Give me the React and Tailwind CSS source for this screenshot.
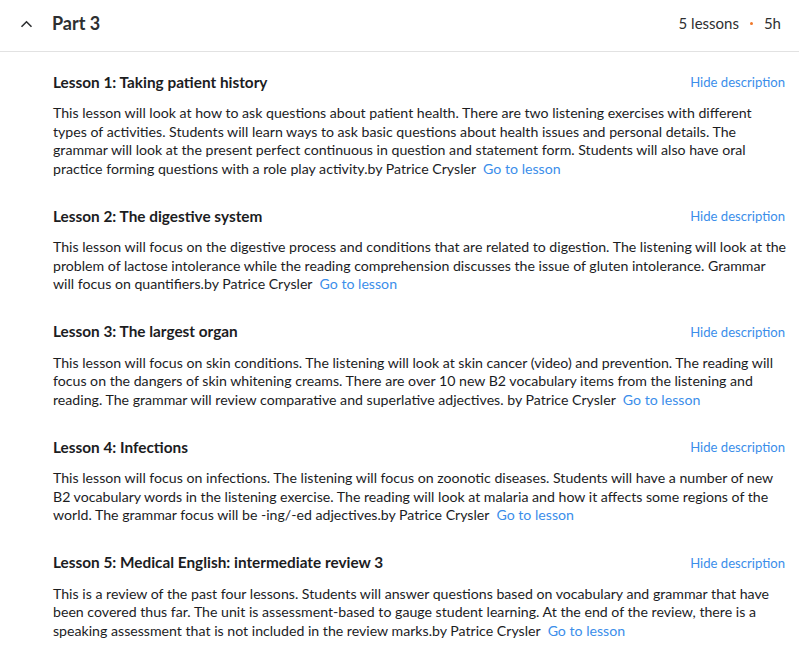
import React from "react";

const lessons = [
  {
    title: "Lesson 1: Taking patient history",
    desc: "This lesson will look at how to ask questions about patient health. There are two listening exercises with different types of activities. Students will learn ways to ask basic questions about health issues and personal details. The grammar will look at the present perfect continuous in question and statement form. Students will also have oral practice forming questions with a role play activity.by Patrice Crysler",
  },
  {
    title: "Lesson 2: The digestive system",
    desc: "This lesson will focus on the digestive process and conditions that are related to digestion. The listening will look at the problem of lactose intolerance while the reading comprehension discusses the issue of gluten intolerance. Grammar will focus on quantifiers.by Patrice Crysler",
  },
  {
    title: "Lesson 3: The largest organ",
    desc: "This lesson will focus on skin conditions. The listening will look at skin cancer (video) and prevention. The reading will focus on the dangers of skin whitening creams. There are over 10 new B2 vocabulary items from the listening and reading. The grammar will review comparative and superlative adjectives. by Patrice Crysler",
  },
  {
    title: "Lesson 4: Infections",
    desc: "This lesson will focus on infections. The listening will focus on zoonotic diseases. Students will have a number of new B2 vocabulary words in the listening exercise. The reading will look at malaria and how it affects some regions of the world. The grammar focus will be -ing/-ed adjectives.by Patrice Crysler",
  },
  {
    title: "Lesson 5: Medical English: intermediate review 3",
    desc: "This is a review of the past four lessons. Students will answer questions based on vocabulary and grammar that have been covered thus far. The unit is assessment-based to gauge student learning. At the end of the review, there is a speaking assessment that is not included in the review marks.by Patrice Crysler",
  },
];

export default function App() {
  return (
    <div className="w-[799px] h-[663px] bg-white overflow-hidden text-[#1c1d1f]" style={{ fontFamily: "Lato, 'Noto Sans', sans-serif" }}>
      <div className="h-[52px] border-b border-[#e2e2e2] flex items-center pl-[20px] pr-[18px] pb-[4px]">
        <svg width="13" height="8" viewBox="0 0 13 8" className="mr-[19px]">
          <path d="M1.5 6.8 L6.5 1.8 L11.5 6.8" fill="none" stroke="#2d2f31" strokeWidth="1.6" />
        </svg>
        <span className="text-[18px] font-bold text-[#2d2f31]">Part 3</span>
        <div className="ml-auto flex items-center text-[15px] text-[#2d2f31]">
          <span>5 lessons</span>
          <span className="mx-[11px] w-[3px] h-[3px] rounded-full bg-[#f0782a] inline-block" />
          <span>5h</span>
        </div>
      </div>
      <div className="pl-[53px] pr-[12px] pt-[20px]">
        {lessons.map((l, i) => (
          <div key={i} className="mb-[28px]">
            <div className="flex items-center h-[20px] pr-[2px]">
              <span className="text-[15.35px] font-bold text-[#1c1d1f]">{l.title}</span>
              <span className="ml-auto pt-[2px] text-[13.1px] text-[#3b8eea]">Hide description</span>
            </div>
            <p className="mt-[12px] text-[14.15px] leading-[18.5px] text-[#1c1d1f]">
              {l.desc}
              <span className="ml-[7px] text-[#3b8eea]">Go to lesson</span>
            </p>
          </div>
        ))}
      </div>
    </div>
  );
}
